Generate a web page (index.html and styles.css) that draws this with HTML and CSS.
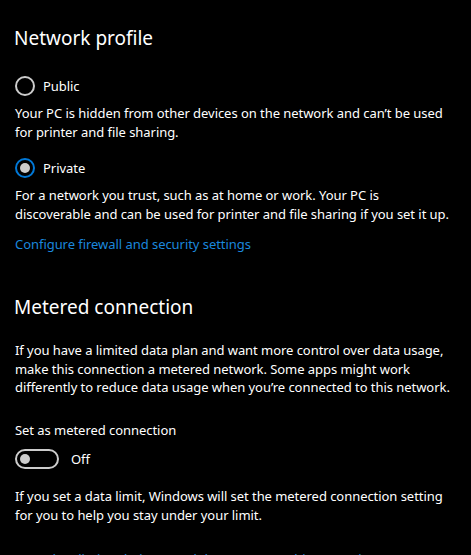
FILE: index.html
```html
<!DOCTYPE html>
<html lang="en">
<head>
  <meta charset="UTF-8" />
  <title>Network profile</title>
  <meta name="viewport" content="width=device-width, initial-scale=1.0"/>
  <link rel="stylesheet" href="styles.css">
</head>
<body>
  <div class="page">
    <section class="group">
      <h2 class="group-title">Network profile</h2>

      <label class="radio">
        <span class="radio-circle"></span>
        <span>Public</span>
      </label>
      <p class="desc">Your PC is hidden from other devices on the network and can’t be used for printer and file sharing.</p>

      <label class="radio checked">
        <span class="radio-circle"></span>
        <span>Private</span>
      </label>
      <p class="desc">For a network you trust, such as at home or work. Your PC is discoverable and can be used for printer and file sharing if you set it up.</p>

      <a class="link" href="#">Configure firewall and security settings</a>
    </section>

    <section class="group metered">
      <h2 class="group-title">Metered connection</h2>
      <p class="desc intro">If you have a limited data plan and want more control over data usage, make this connection a metered network. Some apps might work differently to reduce data usage when you’re connected to this network.</p>

      <div class="field-label">Set as metered connection</div>
      <div class="toggle-row">
        <span class="toggle"><span class="knob"></span></span>
        <span>Off</span>
      </div>

      <p class="desc note">If you set a data limit, Windows will set the metered connection setting for you to help you stay under your limit.</p>

      <a class="link" href="#">Set a data limit to help control data usage on this network</a>
    </section>
  </div>
</body>
</html>
```

FILE: styles.css
```css
:root {
  --bg: #000000;
  --text: #ffffff;
  --muted: #cccccc;
  --accent: #0078d7;
  --link: #1b87dc;
}

* {
  box-sizing: border-box;
  margin: 0;
  padding: 0;
}

body {
  background: var(--bg);
  color: var(--text);
  font-family: 'Segoe UI', 'Noto Sans', sans-serif;
  font-size: 13px;
  letter-spacing: -0.05px;
  line-height: 18.6px;
  overflow: hidden;
}

.page {
  padding: 24px 16px 0 15px;
}

.group {
  display: flex;
  flex-direction: column;
  align-items: flex-start;
}

.group-title {
  font-size: 19px;
  font-weight: 400;
  line-height: 28px;
  letter-spacing: 0;
  margin-left: -1px;
  margin-bottom: 24px;
}

.radio {
  display: flex;
  align-items: center;
  gap: 8px;
  height: 20px;
}

.radio-circle {
  width: 20px;
  height: 20px;
  border: 2px solid var(--muted);
  border-radius: 50%;
  display: flex;
  align-items: center;
  justify-content: center;
}

.radio.checked .radio-circle {
  border-color: var(--accent);
}

.radio.checked .radio-circle::after {
  content: '';
  width: 10px;
  height: 10px;
  border-radius: 50%;
  background: var(--muted);
}

.desc {
  margin-top: 8px;
  margin-bottom: 17px;
}

.link {
  color: var(--link);
  text-decoration: none;
  margin-top: -5px;
}

.metered {
  margin-top: 39px;
}

.metered .group-title {
  margin-bottom: 20px;
}

.desc.intro {
  margin: 0 0 24px;
}

.field-label {
  margin-bottom: 10px;
}

.toggle-row {
  display: flex;
  align-items: center;
  gap: 12px;
  height: 20px;
}

.toggle {
  width: 44px;
  height: 20px;
  border: 2px solid var(--muted);
  border-radius: 10px;
  display: flex;
  align-items: center;
  padding-left: 3px;
}

.knob {
  width: 10px;
  height: 10px;
  border-radius: 50%;
  background: var(--muted);
}

.desc.note {
  margin: 18px 0 25px;
}

.desc.note + .link {
  margin-top: 0;
}
```
